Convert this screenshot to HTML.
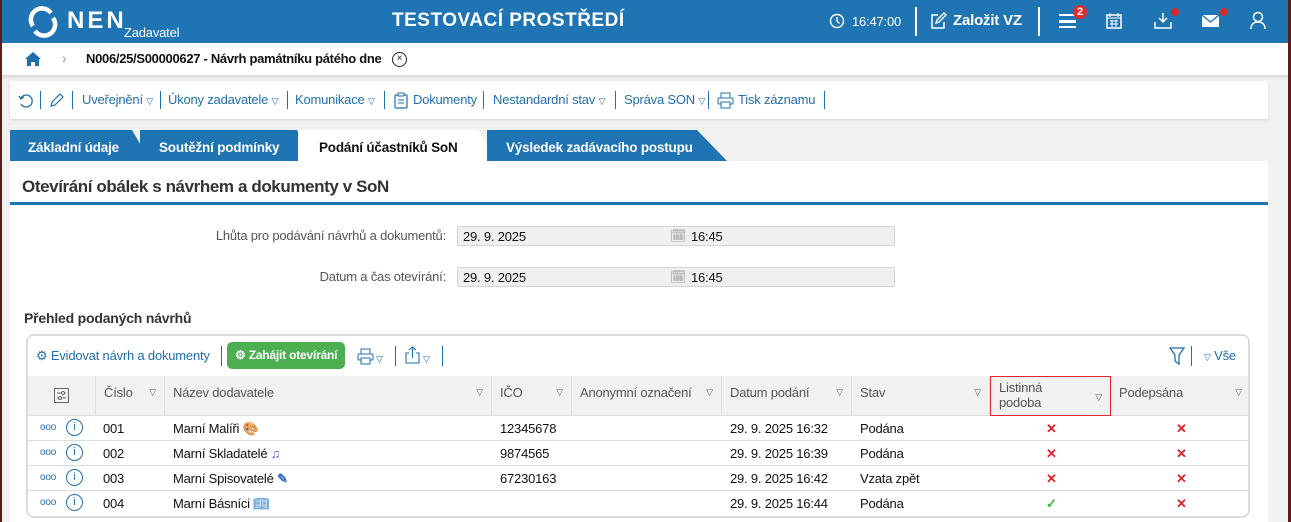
<!DOCTYPE html>
<html><head><meta charset="utf-8"><style>
*{box-sizing:border-box;margin:0;padding:0}
body{width:1291px;height:522px;overflow:hidden;background:#f1f1f1;font-family:"Liberation Sans",Arial,sans-serif;color:#222;position:relative;letter-spacing:-0.2px}
.a{position:absolute;white-space:nowrap}
#hdr{left:0;top:0;width:1291px;height:43px;background:#1f74b4;color:#fff}
#bc{left:0;top:43px;width:1291px;height:32px;background:#fff;box-shadow:0 2px 4px rgba(0,0,0,.12)}
.edgeL{left:0;top:0;width:2px;height:522px;background:#5b1c1c;z-index:9}
.edgeR{right:0;top:0;width:3px;height:522px;background:#5b1c1c;z-index:9}
#tb{left:10px;top:81px;width:1258px;height:38px;background:#fff;box-shadow:0 1px 2px rgba(0,0,0,.12);font-size:13px;color:#1f6fae}
#tb span.it{position:absolute;top:11px}
#tb i{position:absolute;top:10px;width:1px;height:18px;background:#1f6fae}
.tab{top:130px;height:31px;font-size:13.5px;font-weight:bold;color:#fff;padding-top:10px;background:#1f74b4}
#panel{left:10px;top:161px;width:1258px;height:361px;background:#fff}
.lbl{font-size:13px;color:#555;text-align:right}
.inp{left:457px;width:438px;height:20px;background:#f0f0f0;border:1px solid #d4d4d4;border-radius:2px;font-size:13px;color:#111}
#tbl{left:26px;top:334px;width:1224px;height:184px;border:2px solid #dcdcdc;border-radius:8px;background:#fff;overflow:hidden}
.th{top:40px;height:40px;background:#f1f1f1;border-right:1px solid #ddd;font-size:13px;color:#555;padding:9px 0 0 8px;border-bottom:1px solid #ddd}
.tri{position:absolute;right:8px;top:11px;font-size:9px;color:#666}
.row{left:0;width:1222px;height:25px;border-bottom:1px solid #ddd;font-size:13px;color:#111}
.row span{position:absolute;top:5px}
.x{color:#d9262b;font-weight:bold;font-size:13px}
small{font-size:9px}
</style></head><body>
<div class="a edgeL"></div><div class="a edgeR"></div>
<div class="a" id="hdr">
 <svg class="a" style="left:27px;top:6px" width="32" height="32" viewBox="0 0 32 32"><path d="M6 20A11 11 0 0 1 24 7" fill="none" stroke="#fff" stroke-width="4.5"/><path d="M26 12A11 11 0 0 1 8 25" fill="none" stroke="#fff" stroke-width="4.5"/></svg>
 <div class="a" style="left:67px;top:7px;font-size:24px;font-weight:bold;letter-spacing:3px">NEN</div>
 <div class="a" style="left:124px;top:25px;font-size:13px">Zadavatel</div>
 <div class="a" style="left:392px;top:10px;font-size:19px;font-weight:bold;letter-spacing:0.5px">TESTOVACÍ PROSTŘEDÍ</div>
 <svg class="a" style="left:829px;top:13px" width="16" height="16" viewBox="0 0 16 16"><circle cx="8" cy="8" r="6.5" fill="none" stroke="#fff" stroke-width="1.4"/><path d="M8 4v4l2.5 2.5" fill="none" stroke="#fff" stroke-width="1.4"/></svg>
 <div class="a" style="left:852px;top:14px;font-size:13px">16:47:00</div>
 <div class="a" style="left:915px;top:7px;width:2px;height:29px;background:#fff"></div>
 <svg class="a" style="left:929px;top:12px" width="18" height="18" viewBox="0 0 18 18"><path d="M9 3H3v13h12v-6" fill="none" stroke="#fff" stroke-width="1.5"/><path d="M7 11l1-3 7-7 2 2-7 7z" fill="none" stroke="#fff" stroke-width="1.4"/></svg>
 <div class="a" style="left:953px;top:12px;font-size:15px;font-weight:bold">Založit VZ</div>
 <div class="a" style="left:1038px;top:7px;width:2px;height:29px;background:#fff"></div>
 <div class="a" style="left:1059px;top:14px;width:17px;height:14px;border-top:2.5px solid #fff;border-bottom:2.5px solid #fff"></div>
 <div class="a" style="left:1059px;top:20px;width:17px;height:2.5px;background:#fff"></div>
 <div class="a" style="left:1073px;top:5px;width:14px;height:14px;border-radius:7px;background:#e02b2b;font-size:11px;font-weight:bold;text-align:center;line-height:14px">2</div>
 <svg class="a" style="left:1106px;top:12px" width="16" height="17" viewBox="0 0 16 17"><rect x="1" y="3" width="14" height="13" fill="none" stroke="#fff" stroke-width="1.5"/><path d="M1 6h14M4 1v4M12 1v4M4 9h8M4 12h8M6 8v7M10 8v7" stroke="#fff" stroke-width="1"/></svg>
 <svg class="a" style="left:1154px;top:12px" width="18" height="17" viewBox="0 0 18 17"><path d="M9 1v9M5 6l4 4 4-4M1 10v6h16v-6" fill="none" stroke="#fff" stroke-width="1.5"/></svg>
 <div class="a" style="left:1171px;top:8px;width:8px;height:8px;border-radius:4px;background:#d32a2a"></div>
 <svg class="a" style="left:1201px;top:14px" width="19" height="14" viewBox="0 0 19 14"><rect x="1" y="1" width="17" height="12" fill="#fff"/><path d="M1 1l8.5 7L18 1" fill="none" stroke="#1f74b4" stroke-width="1.4"/></svg>
 <div class="a" style="left:1220px;top:8px;width:8px;height:8px;border-radius:4px;background:#d32a2a"></div>
 <svg class="a" style="left:1250px;top:11px" width="16" height="19" viewBox="0 0 16 19"><circle cx="8" cy="6" r="4.5" fill="none" stroke="#fff" stroke-width="1.5"/><path d="M1 18c0-5 3-7 7-7s7 2 7 7" fill="none" stroke="#fff" stroke-width="1.5"/></svg>
</div>
<div class="a" id="bc">
 <svg class="a" style="left:24px;top:8px" width="18" height="15" viewBox="0 0 18 15"><path d="M9 1L1 8h2v7h4v-4h4v4h4V8h2z" fill="#1f6fae"/></svg>
 <div class="a" style="left:62px;top:7px;font-size:14px;color:#999">›</div>
 <div class="a" style="left:86px;top:8px;font-size:13px;font-weight:bold;color:#111;letter-spacing:-0.3px">N006/25/S00000627 - Návrh památníku pátého dne</div>
 <div class="a" style="left:392px;top:9px;width:15px;height:15px;border:1.3px solid #222;border-radius:50%;font-size:10px;text-align:center;line-height:12px">×</div>
</div>
<div class="a" id="tb">
 <svg class="a" style="left:8px;top:12px" width="16" height="16" viewBox="0 0 16 16"><path d="M3 5A6 6 0 1 1 3 11" fill="none" stroke="#1f6fae" stroke-width="1.3"/><path d="M1 3l2 3 3-2" fill="none" stroke="#1f6fae" stroke-width="1.3"/></svg>
 <i style="left:30px"></i>
 <svg class="a" style="left:39px;top:11px" width="16" height="16" viewBox="0 0 16 16"><path d="M2 14l1-4 8-8 3 3-8 8z" fill="none" stroke="#1f6fae" stroke-width="1.2"/></svg>
 <i style="left:62px"></i>
 <span class="it" style="left:72px">Uveřejnění <small>▽</small></span>
 <i style="left:150px"></i>
 <span class="it" style="left:158px">Úkony zadavatele <small>▽</small></span>
 <i style="left:277px"></i>
 <span class="it" style="left:285px">Komunikace <small>▽</small></span>
 <i style="left:374px"></i>
 <svg class="a" style="left:384px;top:11px" width="14" height="17" viewBox="0 0 14 17"><rect x="1" y="3" width="12" height="13" rx="1" fill="none" stroke="#1f6fae" stroke-width="1.2"/><rect x="4" y="1" width="6" height="3" fill="#fff" stroke="#1f6fae"/><path d="M4 8h6M4 11h6" stroke="#1f6fae"/></svg>
 <span class="it" style="left:403px">Dokumenty</span>
 <i style="left:473px"></i>
 <span class="it" style="left:483px">Nestandardní stav <small>▽</small></span>
 <i style="left:605px"></i>
 <span class="it" style="left:614px">Správa SON <small>▽</small></span>
 <i style="left:698px"></i>
 <svg class="a" style="left:707px;top:11px" width="17" height="17" viewBox="0 0 17 17"><rect x="4" y="1" width="9" height="5" fill="none" stroke="#1f6fae"/><rect x="1" y="6" width="15" height="6" rx="1" fill="none" stroke="#1f6fae"/><rect x="4" y="10" width="9" height="6" fill="#fff" stroke="#1f6fae"/></svg>
 <span class="it" style="left:728px">Tisk záznamu</span>
 <i style="left:814px"></i>
</div>
<div class="a tab" style="left:10px;width:140px;padding-left:18px;clip-path:polygon(0 0,122px 0,140px 31px,0 31px)">Základní údaje</div>
<div class="a tab" style="left:140px;width:175px;padding-left:19px;clip-path:polygon(0 0,157px 0,175px 31px,0 31px)">Soutěžní podmínky</div>
<div class="a tab" style="left:298px;width:200px;padding-left:21px;background:#fff;color:#111;clip-path:polygon(0 0,180px 0,200px 31px,0 31px)">Podání účastníků SoN</div>
<div class="a tab" style="left:487px;width:240px;padding-left:19px;clip-path:polygon(0 0,210px 0,240px 31px,0 31px)">Výsledek zadávacího postupu</div>
<div class="a" id="panel"></div>
<div class="a" style="left:22px;top:177px;font-size:17px;font-weight:bold;color:#333;letter-spacing:-0.4px">Otevírání obálek s návrhem a dokumenty v SoN</div>
<div class="a" style="left:10px;top:202px;width:1258px;height:3px;background:#1f74b4"></div>
<div class="a lbl" style="left:150px;width:296px;top:228px">Lhůta pro podávání návrhů a dokumentů:</div>
<div class="a inp" style="top:226px"><span class="a" style="left:5px;top:2px">29. 9. 2025</span><span class="a" style="left:212px;top:1px;color:#999">🗓︎</span><span class="a" style="left:233px;top:2px">16:45</span></div>
<div class="a lbl" style="left:150px;width:296px;top:269px">Datum a čas otevírání:</div>
<div class="a inp" style="top:267px"><span class="a" style="left:5px;top:2px">29. 9. 2025</span><span class="a" style="left:212px;top:1px;color:#999">🗓︎</span><span class="a" style="left:233px;top:2px">16:45</span></div>
<div class="a" style="left:24px;top:310px;font-size:14px;font-weight:bold;color:#333">Přehled podaných návrhů</div>
<div class="a" id="tbl">
 <div class="a" style="left:8px;top:12px;font-size:13px;color:#1f6fae">⚙ Evidovat návrh a dokumenty</div>
 <div class="a" style="left:193px;top:10px;width:1px;height:20px;background:#1f6fae"></div>
 <div class="a" style="left:199px;top:6px;width:118px;height:27px;background:#4caf50;border-radius:5px;color:#fff;font-size:12px;font-weight:bold;padding:6px 0 0 8px">⚙ Zahájit otevírání</div>
 <svg class="a" style="left:329px;top:12px" width="17" height="17" viewBox="0 0 17 17"><rect x="4" y="1" width="9" height="5" fill="none" stroke="#1f6fae"/><rect x="1" y="6" width="15" height="6" rx="1" fill="none" stroke="#1f6fae"/><rect x="4" y="10" width="9" height="6" fill="#fff" stroke="#1f6fae"/></svg>
 <div class="a" style="left:348px;top:13px;color:#1f6fae"><small>▽</small></div>
 <div class="a" style="left:367px;top:10px;width:1px;height:20px;background:#1f6fae"></div>
 <svg class="a" style="left:377px;top:10px" width="15" height="18" viewBox="0 0 15 18"><path d="M4 7H1v10h13V7h-3M7.5 12V1M4 4l3.5-3 3.5 3" fill="none" stroke="#1f6fae" stroke-width="1.1"/></svg>
 <div class="a" style="left:395px;top:13px;color:#1f6fae"><small>▽</small></div>
 <div class="a" style="left:414px;top:10px;width:1px;height:20px;background:#1f6fae"></div>
 <svg class="a" style="left:1141px;top:11px" width="16" height="18" viewBox="0 0 16 18"><path d="M1 1h14L10 8v9l-4-3V8z" fill="none" stroke="#1f6fae" stroke-width="1.3"/></svg>
 <div class="a" style="left:1163px;top:10px;width:1px;height:20px;background:#1f6fae"></div>
 <div class="a" style="left:1176px;top:12px;font-size:13px;color:#1f6fae"><small>▽</small> Vše</div>
 <div class="a" style="left:1220px;top:10px;width:1px;height:20px;background:#1f6fae"></div>
 <div class="a th" style="left:0;width:68px"><svg style="position:absolute;left:26px;top:12px" width="15" height="15" viewBox="0 0 15 15"><rect x=".5" y=".5" width="14" height="14" fill="none" stroke="#666"/><path d="M3 5h9M3 10h9" stroke="#666"/><circle cx="9" cy="5" r="1.5" fill="#fff" stroke="#666"/><circle cx="6" cy="10" r="1.5" fill="#fff" stroke="#666"/></svg></div>
 <div class="a th" style="left:68px;width:69px">Číslo<span class="tri">▽</span></div>
 <div class="a th" style="left:137px;width:327px">Název dodavatele<span class="tri">▽</span></div>
 <div class="a th" style="left:464px;width:80px">IČO<span class="tri">▽</span></div>
 <div class="a th" style="left:544px;width:150px">Anonymní označení<span class="tri">▽</span></div>
 <div class="a th" style="left:694px;width:130px">Datum podání<span class="tri">▽</span></div>
 <div class="a th" style="left:824px;width:138px">Stav<span class="tri">▽</span></div>
 <div class="a th" style="left:962px;width:121px;padding-top:3px;line-height:15px;border:1px solid #e0262b">Listinná<br>podoba<span class="tri" style="top:13px">▽</span></div>
 <div class="a th" style="left:1083px;width:139px;border-right:0">Podepsána<span class="tri">▽</span></div>
 <div class="a row" style="top:80px"><span style="left:12px;color:#1f6fae;font-size:10px;top:6px">ooo</span><span style="left:38px;top:3px;width:17px;height:17px;border:1.3px solid #1f6fae;border-radius:50%;color:#1f6fae;font-size:11px;text-align:center;line-height:15px">i</span><span style="left:75px">001</span><span style="left:145px">Marní Malíři 🎨</span><span style="left:472px">12345678</span><span style="left:702px">29. 9. 2025 16:32</span><span style="left:832px">Podána</span><span class="x" style="left:1018px">✕</span><span class="x" style="left:1148px">✕</span></div>
 <div class="a row" style="top:105px"><span style="left:12px;color:#1f6fae;font-size:10px;top:6px">ooo</span><span style="left:38px;top:3px;width:17px;height:17px;border:1.3px solid #1f6fae;border-radius:50%;color:#1f6fae;font-size:11px;text-align:center;line-height:15px">i</span><span style="left:75px">002</span><span style="left:145px">Marní Skladatelé <b style="color:#7a4fb5">♫</b></span><span style="left:472px">9874565</span><span style="left:702px">29. 9. 2025 16:39</span><span style="left:832px">Podána</span><span class="x" style="left:1018px">✕</span><span class="x" style="left:1148px">✕</span></div>
 <div class="a row" style="top:130px"><span style="left:12px;color:#1f6fae;font-size:10px;top:6px">ooo</span><span style="left:38px;top:3px;width:17px;height:17px;border:1.3px solid #1f6fae;border-radius:50%;color:#1f6fae;font-size:11px;text-align:center;line-height:15px">i</span><span style="left:75px">003</span><span style="left:145px">Marní Spisovatelé <b style="color:#3a6fc0">✎</b></span><span style="left:472px">67230163</span><span style="left:702px">29. 9. 2025 16:42</span><span style="left:832px">Vzata zpět</span><span class="x" style="left:1018px">✕</span><span class="x" style="left:1148px">✕</span></div>
 <div class="a row" style="top:155px;border-bottom:0"><span style="left:12px;color:#1f6fae;font-size:10px;top:6px">ooo</span><span style="left:38px;top:3px;width:17px;height:17px;border:1.3px solid #1f6fae;border-radius:50%;color:#1f6fae;font-size:11px;text-align:center;line-height:15px">i</span><span style="left:75px">004</span><span style="left:145px">Marní Básníci <b style="color:#7aaee0">📖︎</b></span><span style="left:702px">29. 9. 2025 16:44</span><span style="left:832px">Podána</span><span style="left:1018px;color:#3cae3c;font-weight:bold">✓</span><span class="x" style="left:1148px">✕</span></div>
</div>
</body></html>
